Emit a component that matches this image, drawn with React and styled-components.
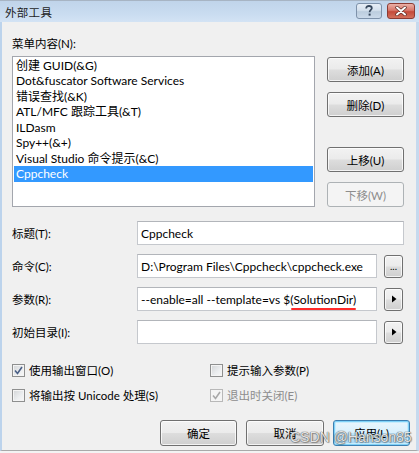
import React from "react";
import styled, { createGlobalStyle, css } from "styled-components";

const Global = createGlobalStyle`
  html, body { margin: 0; padding: 0; background: #f3f3f3; }
  body { font-family: Lato, "Noto Sans CJK SC", sans-serif; }
`;

const FONT = `Lato, "Noto Sans CJK SC", sans-serif`;

const Window = styled.div`
  position: relative;
  width: 419px;
  height: 451px;
  box-sizing: border-box;
  background: #f0f0f0;
  border-left: 2px solid #bcd3ec;
  border-right: 3px solid #c6d9ee;
  border-bottom: 1px solid #a9a9a9;
  display: flex;
  flex-direction: column;
  font-family: ${FONT};
  font-size: 11.5px;
  color: #000;
`;

const TitleBar = styled.div`
  height: 22px;
  box-sizing: border-box;
  margin-left: -2px;
  margin-right: -3px;
  padding-left: 5px;
  padding-right: 4px;
  border-top: 1px solid #a7b4c3;
  background: linear-gradient(180deg, #c0d4ea 0%, #c9dcf0 60%, #d3e3f4 100%);
  display: flex;
  align-items: center;
  justify-content: space-between;
`;

const TitleText = styled.span`
  font-size: 11.5px;
  color: #1e1e1e;
  letter-spacing: 0.3px;
`;

const CaptionButtons = styled.div`
  display: flex;
  gap: 5px;
  align-items: flex-start;
  align-self: flex-start;
  padding-top: 2px;
`;

const CapBtn = styled.div`
  height: 16px;
  box-sizing: border-box;
  border-radius: 3px;
  display: flex;
  align-items: center;
  justify-content: center;
  ${(p) =>
    p.$close
      ? css`
          width: 28px;
          border: 1px solid #8c3b33;
          background: linear-gradient(180deg, #eab0a6 0%, #d8776a 45%, #c44a3a 55%, #d3705c 100%);
        `
      : css`
          width: 26px;
          border: 1px solid #7e92aa;
          background: linear-gradient(180deg, #e7eef6 0%, #d4e0ed 45%, #bccdde 55%, #cbdaea 100%);
        `}
`;

const Content = styled.div`
  flex: 1;
  padding: 14px 12px 0 10px;
  display: flex;
  flex-direction: column;
`;

const Label = styled.div`
  height: 16px;
  line-height: 16px;
  white-space: nowrap;
  color: ${(p) => (p.$disabled ? "#8d8d8d" : "#000")};
`;

const ListArea = styled.div`
  margin-top: 4px;
  display: flex;
  gap: 12px;
`;

const ListBox = styled.div`
  width: 303px;
  height: 151px;
  box-sizing: border-box;
  border: 1px solid #a3a6ad;
  background: #fff;
  padding: 0.5px 1px 0;
  display: flex;
  flex-direction: column;
  font-size: 12px;
`;

const ListItem = styled.div`
  height: 15.5px;
  line-height: 15.5px;
  padding-left: 2px;
  white-space: nowrap;
  ${(p) =>
    p.$selected &&
    css`
      background: #3399ff;
      color: #fff;
    `}
`;

const ButtonColumn = styled.div`
  width: 77px;
  padding-top: 1px;
  display: flex;
  flex-direction: column;
`;

const Button = styled.button`
  font-family: ${FONT};
  font-size: 11.5px;
  width: ${(p) => p.$w || 77}px;
  height: ${(p) => p.$h || 25}px;
  margin-top: ${(p) => p.$mt || 0}px;
  box-sizing: border-box;
  padding: 0;
  border-radius: 3px;
  border: 1px solid #707070;
  color: #000;
  background: linear-gradient(180deg, #f2f2f2 0%, #ebebeb 48%, #dddddd 52%, #cfcfcf 100%);
  box-shadow: inset 0 0 0 1px rgba(255, 255, 255, 0.75);
  display: flex;
  align-items: center;
  justify-content: center;
  ${(p) =>
    p.$disabled &&
    css`
      border-color: #adb2b5;
      background: #f4f4f4;
      color: #8d8d8d;
      box-shadow: none;
    `}
  ${(p) =>
    p.$default &&
    css`
      border-color: #3c7fb1;
      background: linear-gradient(180deg, #eaf6fd 0%, #d9f0fc 48%, #bee6fd 52%, #a7d9f5 100%);
      box-shadow: inset 0 0 0 1px #7fd2f8, inset 0 0 0 2px #c8ecfc;
    `}
`;

const Form = styled.div`
  margin-top: 14px;
  display: flex;
  flex-direction: column;
  gap: 9px;
`;

const FormRow = styled.div`
  display: flex;
  align-items: center;
  height: 24px;
`;

const FormLabel = styled.div`
  width: 125px;
  flex: none;
  white-space: nowrap;
`;

const Input = styled.div`
  position: relative;
  flex: ${(p) => (p.$full ? "1" : "none")};
  width: ${(p) => (p.$full ? "auto" : "240px")};
  height: 24px;
  box-sizing: border-box;
  border: 1px solid #c5c8cd;
  border-top-color: #b2b5ba;
  background: #fff;
  padding-left: 3px;
  display: flex;
  align-items: center;
  font-size: 12px;
  white-space: nowrap;
  overflow: hidden;
`;

const Marked = styled.span`
  position: relative;
  &::after {
    content: "";
    position: absolute;
    left: 1px;
    right: 0;
    bottom: -3px;
    height: 2px;
    border-radius: 1px;
    background: #ff2b2b;
  }
`;

const SmallButton = styled(Button)`
  margin-left: 7px;
  font-size: 10px;
  line-height: 1;
`;

const Checks = styled.div`
  margin-top: 16px;
  display: grid;
  grid-template-columns: 198px 1fr;
  row-gap: 5px;
`;

const CheckRow = styled.div`
  height: 20px;
  display: flex;
  align-items: center;
  gap: 4px;
  white-space: nowrap;
  color: ${(p) => (p.$disabled ? "#8d8d8d" : "#000")};
`;

const Box = styled.span`
  width: 13px;
  height: 13px;
  box-sizing: border-box;
  flex: none;
  border: 1px solid ${(p) => (p.$disabled ? "#b8b8b8" : "#8e8f8f")};
  background: ${(p) =>
    p.$disabled
      ? "#f4f4f4"
      : "linear-gradient(135deg, #d2d4d6 0%, #eceef0 60%, #f8f8f8 100%)"};
  box-shadow: inset 0 0 0 1px #f4f4f4;
  display: flex;
  align-items: center;
  justify-content: center;
`;

const Footer = styled.div`
  margin-top: 15px;
  margin-right: -6px;
  display: flex;
  justify-content: flex-end;
  gap: 9px;
`;

const Watermark = styled.div`
  position: absolute;
  left: 288px;
  top: 429px;
  font-family: "Liberation Sans", Arial, sans-serif;
  font-size: 14px;
  color: rgba(255, 255, 255, 0.85);
  text-shadow: 0 0 1px #555, 0 0 1px #555, 1px 1px 1px rgba(0, 0, 0, 0.3);
  white-space: nowrap;
  pointer-events: none;
`;

const Check = ({ color }) => (
  <svg width="9" height="9" viewBox="0 0 9 9">
    <path d="M1 4.5 L3.5 7.5 L8 1" fill="none" stroke={color} strokeWidth="1.6" />
  </svg>
);

const Tri = () => (
  <svg width="6" height="8" viewBox="0 0 6 8">
    <path d="M1 0.5 L5.5 4 L1 7.5 Z" fill="#000" />
  </svg>
);

const items = [
  "创建 GUID(&G)",
  "Dot&fuscator Software Services",
  "错误查找(&K)",
  "ATL/MFC 跟踪工具(&T)",
  "ILDasm",
  "Spy++(&+)",
  "Visual Studio 命令提示(&C)",
  "Cppcheck",
];

export default function App() {
  return (
    <>
      <Global />
      <Window>
        <TitleBar>
          <TitleText>外部工具</TitleText>
          <CaptionButtons>
            <CapBtn>
              <svg width="10" height="12" viewBox="0 0 10 12">
                <path
                  d="M2.2 3.6 C2.2 1.6 3.6 1 5 1 C6.6 1 7.8 1.9 7.8 3.3 C7.8 4.8 5.6 5.2 5.6 7.2"
                  fill="none"
                  stroke="#36475c"
                  strokeWidth="1.8"
                />
                <rect x="4.6" y="8.6" width="2" height="2" fill="#36475c" />
              </svg>
            </CapBtn>
            <CapBtn $close>
              <svg width="12" height="10" viewBox="0 0 12 10">
                <path d="M2 1.5 L10 8.5 M10 1.5 L2 8.5" stroke="#5a2a24" strokeWidth="3.4" strokeLinecap="round" />
                <path d="M2 1.5 L10 8.5 M10 1.5 L2 8.5" stroke="#fff" strokeWidth="2" strokeLinecap="round" />
              </svg>
            </CapBtn>
          </CaptionButtons>
        </TitleBar>
        <Content>
          <Label>菜单内容(N):</Label>
          <ListArea>
            <ListBox>
              {items.map((t, i) => (
                <ListItem key={t} $selected={i === items.length - 1}>
                  {t}
                </ListItem>
              ))}
            </ListBox>
            <ButtonColumn>
              <Button>添加(A)</Button>
              <Button $mt={10}>删除(D)</Button>
              <Button $mt={30}>上移(U)</Button>
              <Button $mt={10} $disabled>
                下移(W)
              </Button>
            </ButtonColumn>
          </ListArea>
          <Form>
            <FormRow>
              <FormLabel>标题(T):</FormLabel>
              <Input $full>Cppcheck</Input>
            </FormRow>
            <FormRow>
              <FormLabel>命令(C):</FormLabel>
              <Input>D:\Program Files\Cppcheck\cppcheck.exe</Input>
              <SmallButton $w={19} $h={23}>...</SmallButton>
            </FormRow>
            <FormRow>
              <FormLabel>参数(R):</FormLabel>
              <Input>
                --enable=all --template=vs $<Marked>(SolutionDir)</Marked>
              </Input>
              <SmallButton $w={19} $h={23}>
                <Tri />
              </SmallButton>
            </FormRow>
            <FormRow>
              <FormLabel>初始目录(I):</FormLabel>
              <Input></Input>
              <SmallButton $w={19} $h={23}>
                <Tri />
              </SmallButton>
            </FormRow>
          </Form>
          <Checks>
            <CheckRow>
              <Box>
                <Check color="#4a5f86" />
              </Box>
              使用输出窗口(O)
            </CheckRow>
            <CheckRow>
              <Box />
              提示输入参数(P)
            </CheckRow>
            <CheckRow>
              <Box />
              将输出按 Unicode 处理(S)
            </CheckRow>
            <CheckRow $disabled>
              <Box $disabled>
                <Check color="#a8a8a8" />
              </Box>
              退出时关闭(E)
            </CheckRow>
          </Checks>
          <Footer>
            <Button $h={26}>确定</Button>
            <Button $h={26} $w={78}>取消</Button>
            <Button $h={26} $w={77} $default>
              应用(L)
            </Button>
          </Footer>
        </Content>
        <Watermark>CSDN @Hanson85</Watermark>
      </Window>
    </>
  );
}
